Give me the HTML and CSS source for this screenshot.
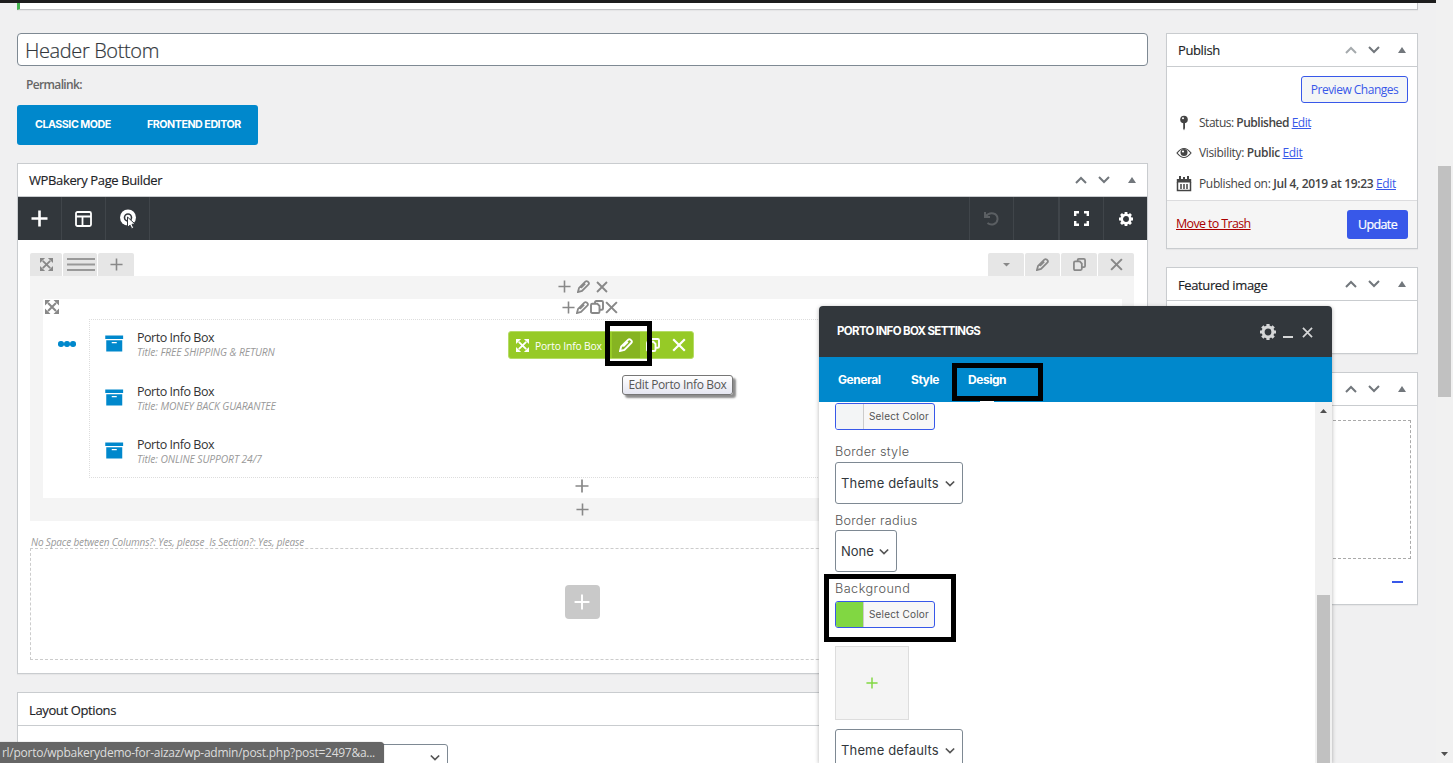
FILE: index.html
```html
<!DOCTYPE html>
<html lang="en">
<head>
<meta charset="utf-8">
<title>Edit Block</title>
<link rel="stylesheet" href="styles.css">
</head>
<body>
<svg class="sprite" aria-hidden="true">
  <symbol id="plus" viewBox="0 0 14 14"><path d="M7 0.5v13M0.5 7h13" fill="none" stroke="currentColor" stroke-width="1.7"/></symbol>
  <symbol id="cross" viewBox="0 0 14 14"><path d="M1.200 1.200l11.600 11.600M12.800 1.200l-11.600 11.600" fill="none" stroke="currentColor" stroke-width="2.200"/></symbol>
  <symbol id="pencil" viewBox="0 0 14 14"><path d="M1 13l1.200-4.400L9 1.800q1.200-1.200 2.400-.2l1 1q1 1.200-.2 2.400L5.400 11.800zM8.800 3.800l-4.600 4.600" fill="none" stroke="currentColor" stroke-width="1.900"/></symbol>
  <symbol id="copy" viewBox="0 0 14 14"><path d="M5 3.500V2.300Q5 1 6.300 1h5.400Q13 1 13 2.300v6.200q0 1.300-1.300 1.300H10M2.300 3.700h5L9.500 6v5.700Q9.500 13 8.200 13H2.300Q1 13 1 11.700V5q0-1.300 1.300-1.300z" fill="none" stroke="currentColor" stroke-width="1.900"/></symbol>
  <symbol id="move" viewBox="0 0 14 14"><path d="M3 3l8 8M11 3l-8 8" stroke="currentColor" stroke-width="2"/><path d="M0 0h5.500L0 5.500zM14 0v5.500L8.500 0zM0 14V8.500L5.500 14zM14 14H8.500L14 8.500z" fill="currentColor"/></symbol>
  <symbol id="up" viewBox="0 0 12 8"><path d="M1 7l5-5 5 5" fill="none" stroke="currentColor" stroke-width="2"/></symbol>
  <symbol id="down" viewBox="0 0 12 8"><path d="M1 1l5 5 5-5" fill="none" stroke="currentColor" stroke-width="2"/></symbol>
  <symbol id="tri" viewBox="0 0 8 6"><path d="M4 0l4 6H0z" fill="currentColor"/></symbol>
  <symbol id="gear" viewBox="0 0 16 16"><circle cx="8" cy="8" r="4.900" fill="none" stroke="currentColor" stroke-width="3"/><path d="M8 0v3M8 13v3M0 8h3M13 8h3M2.300 2.300l2 2M11.700 11.700l2 2M2.300 13.700l2-2M11.700 4.300l2-2" stroke="currentColor" stroke-width="3.200"/></symbol>
  <symbol id="archive" viewBox="0 0 18 17"><path fill="currentColor" fill-rule="evenodd" d="M0 0.500h18v3.500H0zM1 5.200h16V16.500H1zM6.500 7v1.200h5V7z"/></symbol>
</svg>

<div class="adminbar"></div>
<div class="notice"></div>

<main class="layout">
  <section class="primary">
    <div class="title-field">Header Bottom</div>
    <div class="permalink">Permalink:</div>
    <div class="modes"><a class="mode">CLASSIC MODE</a><a class="mode mode-front">FRONTEND EDITOR</a></div>

    <div class="box builder">
      <div class="box-head"><h2>WPBakery Page Builder</h2><div class="handles"><svg><use href="#up"/></svg><svg><use href="#down"/></svg><svg class="tri"><use href="#tri"/></svg></div></div>
      <div class="toolbar">
        <div class="tool"><svg width="17" height="17" viewBox="0 0 17 17"><path d="M8.500 .5v16M.5 8.500h16" stroke="#fff" stroke-width="2.600"/></svg></div>
        <div class="tool"><svg width="17" height="16" viewBox="0 0 17 16" fill="none" stroke="#fff" stroke-width="1.800"><rect x="1" y="1" width="15" height="14" rx="1.500"/><path d="M1 5.500h15M7.500 5.500V15"/></svg></div>
        <div class="tool"><svg width="18" height="20" viewBox="0 0 18 20"><circle cx="9" cy="8.500" r="8" fill="#fff"/><circle cx="9" cy="8.500" r="3.500" fill="none" stroke="#32373c" stroke-width="1.600"/><path d="M8.500 8l7.500 7-3 .3 1.700 3.500-2 .9-1.600-3.500-2.600 2z" fill="#fff" stroke="#32373c"/></svg></div>
        <div class="tool tool-undo"><svg width="15" height="15" viewBox="0 0 15 15" fill="none" stroke="#5b5f63" stroke-width="2"><path d="M1 1v5h5M1.500 5.500C6 0 14 2 13.500 8.500 13 13.500 7 15 3.500 12"/></svg></div>
        <div class="tool tool-blank"></div>
        <div class="tool"><svg width="15" height="15" viewBox="0 0 15 15" fill="none" stroke="#fff" stroke-width="2.400"><path d="M1.200 5V1.200H5M10 1.200h3.800V5M13.800 10v3.800H10M5 13.800H1.200V10"/></svg></div>
        <div class="tool tool-last"><svg class="i14 white"><use href="#gear"/></svg></div>
      </div>
      <div class="canvas">
        <div class="row-controls">
          <span class="ctl w32"><svg class="i13"><use href="#move"/></svg></span>
          <span class="ctl w34"><svg width="28" height="13" viewBox="0 0 28 13"><path d="M0 1h28M0 6.500h28M0 12h28" stroke="#999" stroke-width="1.800"/></svg></span>
          <span class="ctl w36"><svg class="i13"><use href="#plus"/></svg></span>
          <span class="ctl w36 push"><svg width="7" height="4" viewBox="0 0 7 4"><path d="M0 0h7L3.500 3.500z" fill="#888"/></svg></span>
          <span class="ctl w35"><svg class="i13"><use href="#pencil"/></svg></span>
          <span class="ctl w36"><svg class="i13"><use href="#copy"/></svg></span>
          <span class="ctl w36"><svg class="i13"><use href="#cross"/></svg></span>
        </div>
        <div class="section-area">
          <div class="col-controls"><svg class="i13"><use href="#plus"/></svg><svg class="i13"><use href="#pencil"/></svg><svg class="i12"><use href="#cross"/></svg></div>
          <div class="column">
            <div class="inner-controls"><svg class="i14 mover"><use href="#move"/></svg><div class="inner-icons"><svg class="i13"><use href="#plus"/></svg><svg class="i13"><use href="#pencil"/></svg><svg class="i14"><use href="#copy"/></svg><svg class="i13"><use href="#cross"/></svg></div></div>
            <div class="inner-row">
              <div class="dots"><i></i><i></i><i></i></div>
              <div class="elements">
                <div class="element"><svg><use href="#archive"/></svg><div><h4>Porto Info Box</h4><p>Title: FREE SHIPPING &amp; RETURN</p></div></div>
                <div class="element"><svg><use href="#archive"/></svg><div><h4>Porto Info Box</h4><p>Title: MONEY BACK GUARANTEE</p></div></div>
                <div class="element"><svg><use href="#archive"/></svg><div><h4>Porto Info Box</h4><p>Title: ONLINE SUPPORT 24/7</p></div></div>
              </div>
            </div>
            <div class="add-line"><svg class="i14"><use href="#plus"/></svg></div>
          </div>
          <div class="add-line add-outer"><svg class="i13"><use href="#plus"/></svg></div>
        </div>
        <div class="params">No Space between Columns?: Yes, please&nbsp; Is Section?: Yes, please</div>
        <div class="dropzone"><span class="big-add"><svg class="i16"><use href="#plus"/></svg></span></div>
      </div>
    </div>

    <div class="box options">
      <div class="box-head low"><h2>Layout Options</h2></div>
      <div class="option-select"><svg class="chev"><use href="#down"/></svg></div>
    </div>
  </section>

  <aside class="side">
    <div class="box">
      <div class="box-head"><h2>Publish</h2><div class="handles"><svg class="faded"><use href="#up"/></svg><svg><use href="#down"/></svg><svg class="tri"><use href="#tri"/></svg></div></div>
      <div class="publish">
        <a class="preview">Preview Changes</a>
        <div class="fact"><svg width="16" height="16" viewBox="0 0 16 16"><circle cx="8" cy="4.500" r="3.800" fill="#444"/><path d="M7.200 7h1.800v6L8 15.500l-.8-2z" fill="#444"/><circle cx="7" cy="3.300" r="1" fill="#fff"/></svg><span class="stat">Status: <b>Published</b> <a>Edit</a></span></div>
        <div class="fact"><svg width="16" height="16" viewBox="0 0 16 16"><path d="M1 8q7-9 14 0-7 9-14 0z" fill="none" stroke="#444" stroke-width="1.200"/><circle cx="8" cy="7.600" r="3.500" fill="#444"/><circle cx="7" cy="6.500" r="1.100" fill="#fff"/></svg><span>Visibility: <b>Public</b> <a>Edit</a></span></div>
        <div class="fact"><svg width="16" height="16" viewBox="0 0 16 16"><path d="M1.500 6v8.500h13V6M5 8v5M8 8v5M11 8v5" fill="none" stroke="#444" stroke-width="1.500"/><path d="M.8 3h14.400v3.500H.8zM3 0h2v4H3zM11 0h2v4h-2zM7 1h2v3H7z" fill="#444"/></svg><span>Published on: <b>Jul 4, 2019 at 19:23</b> <a>Edit</a></span></div>
      </div>
      <div class="publish-foot"><a class="trash">Move to Trash</a><a class="update">Update</a></div>
    </div>
    <div class="box featured">
      <div class="box-head low"><h2>Featured image</h2><div class="handles"><svg><use href="#up"/></svg><svg><use href="#down"/></svg><svg class="tri"><use href="#tri"/></svg></div></div>
    </div>
    <div class="box last">
      <div class="box-head"><div class="handles"><svg><use href="#up"/></svg><svg><use href="#down"/></svg><svg class="tri"><use href="#tri"/></svg></div></div>
      <div class="last-body"><div class="dashed"></div><i class="minus"></i></div>
    </div>
  </aside>
</main>

<div class="hover-bar">
  <svg class="i13 bar-move"><use href="#move"/></svg><span class="bar-name">Porto Info Box</span>
  <span class="bar-edit"><svg class="i14"><use href="#pencil"/></svg></span>
  <svg class="i14 bar-copy"><use href="#copy"/></svg><svg class="i14"><use href="#cross"/></svg>
</div>
<div class="tip">Edit Porto Info Box</div>

<div class="modal">
  <div class="modal-head"><h3>PORTO INFO BOX SETTINGS</h3><div class="modal-actions"><svg class="i16"><use href="#gear"/></svg><i></i><svg class="close"><use href="#cross"/></svg></div></div>
  <div class="tabs"><span class="t-general">General</span><span class="t-style">Style</span><span class="t-design">Design</span></div>
  <div class="modal-body">
    <div class="form">
      <div class="picker"><i></i><span>Select Color</span></div>
      <label class="l-style">Border style</label>
      <div class="select">Theme defaults<svg class="chev"><use href="#down"/></svg></div>
      <label class="l-radius">Border radius</label>
      <div class="select small">None<svg class="chev"><use href="#down"/></svg></div>
      <label class="l-back">Background</label>
      <div class="picker green"><i></i><span>Select Color</span></div>
      <div class="tile"><svg width="12" height="12"><use href="#plus"/></svg></div>
      <div class="select">Theme defaults<svg class="chev"><use href="#down"/></svg></div>
    </div>
    <div class="modal-scroll"><svg width="7" height="4" viewBox="0 0 7 4"><path d="M3.500 0L7 4H0z" fill="#505050"/></svg><i></i></div>
  </div>
</div>

<div class="mark mark-edit"></div>
<div class="mark mark-design"></div>
<div class="tab-notch"></div>
<div class="mark mark-back"></div>

<div class="page-scroll"><i></i><svg width="7" height="4" viewBox="0 0 7 4"><path d="M0 0h7L3.500 4z" fill="#505050"/></svg></div>
<div class="status"><span>rl/porto/wpbakerydemo-for-aizaz/wp-admin/post.php?post=2497&amp;a...</span></div>
</body>
</html>
```
FILE: styles.css
```css
* { box-sizing: border-box; }
body { margin: 0; height: 763px; overflow: hidden; position: relative; background: #f0f0f1; color: #444; font: 13px/20px "Open Sans", "Noto Sans", sans-serif; letter-spacing: -0.35px; }
h2, h3, h4, p { margin: 0; font-weight: 400; }
i { display: block; }
svg { display: block; flex: none; }
.sprite { position: absolute; width: 0; height: 0; }
.i12 { width: 12px; height: 12px; }
.i13 { width: 13px; height: 13px; }
.i14 { width: 14px; height: 14px; }
.i16 { width: 16px; height: 16px; }
.white { color: #fff; }

.adminbar { width: 1436px; height: 3px; background: #1d1d1d; }
.notice { width: 1401px; height: 7px; margin: 0 0 23px 17px; background: #fff; border: solid #c3c4c7; border-width: 0 1px 1px 3px; border-left-color: #46b450; box-shadow: 0 1px 1px rgba(0,0,0,.04); }
.layout { display: grid; grid-template-columns: 1131px 252px; gap: 18px; margin-left: 17px; align-items: start; }

.title-field { height: 33px; border: 1px solid #7e8993; border-radius: 4px; background: #fff; padding: 0 7px; font-size: 20px; line-height: 33px; font-weight: 300; letter-spacing: -.38px; color: #32373c; -webkit-text-stroke: .2px; }
.permalink { margin: 9px 0 10px 9px; font-size: 12px; font-weight: 600; letter-spacing: -.65px; color: #666; }
.modes { display: flex; width: 241px; height: 40px; padding-left: 18px; border-radius: 3px; background: #0088cc; align-items: center; gap: 36px; }
.mode { width: 77px; font: 700 10.700px/16px Inter, sans-serif; color: #fff; letter-spacing: -.48px; white-space: nowrap; }
.mode-front { width: 94px; margin-left: -1px; }

.box { background: #fff; border: 1px solid #c9cccf; box-shadow: 0 1px 1px rgba(0,0,0,.04); }
.box-head { display: flex; align-items: center; height: 33px; border-bottom: 1px solid #c9cccf; padding: 0 11px; }
.box-head h2 { font-size: 13px; font-weight: 400; color: #1d2327; -webkit-text-stroke: .15px; letter-spacing: -.38px; }
.box-head.low h2 { padding-top: 2px; }
.handles { display: flex; align-items: center; gap: 11px; margin-left: auto; color: #72777c; }
.handles svg { width: 12px; height: 8px; }
.handles .tri { width: 8px; height: 6px; margin: 0 0 1px 7px; }
.handles .faded { color: #a5aaad; }

.builder { height: 511px; margin-top: 18px; }
.toolbar { display: flex; height: 43px; background: #32373c; }
.tool { width: 44px; border-right: 1px solid #40454a; display: flex; align-items: center; justify-content: center; }
.tool-undo { margin-left: auto; width: 45px; border-left: 1px solid #40454a; }
.tool-blank { width: 46px; border-right-width: 2px; }
.tool-last { border: 0; width: 43px; }
.canvas { padding: 13px 13px 0 12px; }
.row-controls { display: flex; gap: 1px; height: 23px; color: #888; }
.ctl { display: flex; align-items: center; justify-content: center; background: #e6e6e6; border-radius: 2px 2px 0 0; }
.w32 { width: 32px; } .w34 { width: 34px; padding-left: 2px; } .w35 { width: 35px; } .w36 { width: 36px; }
.push { margin-left: auto; }
.section-area { height: 245px; padding: 0 12px 0 13px; background: #f4f4f4; color: #888; }
.col-controls { display: flex; height: 23px; justify-content: center; align-items: center; gap: 6px; padding: 0 0 2px; }
.column { height: 199px; background: #fff; }
.inner-controls { display: flex; align-items: center; height: 16px; }
.mover { margin-left: 2px; }
.inner-icons { display: flex; align-items: center; gap: 1px; margin-left: 503px; }
.inner-row { display: flex; height: 163px; padding-top: 4px; }
.dots { display: flex; gap: .5px; width: 46px; padding: 22px 0 0 15px; }
.dots i { width: 5.600px; height: 5.600px; border-radius: 50%; background: #0088cc; }
.elements { flex: 1; border: 1px dotted #ddd; padding: 9px 0 0 15px; margin-right: 46px; }
.element { display: flex; gap: 13.500px; height: 53.500px; color: #0088cc; }
.element svg { width: 18.500px; height: 17px; margin-top: 6px; }
.element h4 { font-size: 12.500px; line-height: 17px; color: #333; letter-spacing: -.47px; }
.element p { font-size: 10.300px; line-height: 13px; font-style: italic; color: #999; letter-spacing: -.1px; white-space: nowrap; }
.add-line { display: flex; height: 16px; align-items: center; justify-content: center; padding-right: 1px; }
.add-outer { height: 23px; }
.params { height: 27px; padding: 12px 0 0 1px; font-size: 10px; line-height: 19px; font-style: italic; color: #999; letter-spacing: -.15px; white-space: nowrap; }
.dropzone { display: flex; align-items: center; justify-content: center; height: 112px; padding-bottom: 4px; border: 1px dashed #ccc; }
.big-add { display: flex; align-items: center; justify-content: center; width: 35px; height: 34px; border-radius: 4px; background: #c9c9c9; color: #fff; }
.options { margin-top: 18px; height: 90px; }
.option-select { width: 250px; height: 40px; margin: 18px 0 0 180px; border: 1px solid #7e8993; border-radius: 3px; display: flex; justify-content: flex-end; padding: 9px 7px; color: #555; }
.chev { width: 10px; height: 8px; }

.side .box { margin-bottom: 18px; }
.publish { height: 134px; padding: 9px; border-bottom: 1px solid #dcdcde; }
.preview { display: block; width: 107px; height: 27px; margin: 0 0 10px auto; border: 1px solid #3858e9; border-radius: 3px; background: #f3f5f6; color: #3858e9; text-align: center; line-height: 26px; font-size: 12px; letter-spacing: -.5px; }
.fact { display: flex; gap: 7px; height: 30.300px; white-space: nowrap; font-size: 12px; }
.fact svg { margin-top: 2px; }
.fact b { font-weight: 600; }
.fact a { color: #3858e9; text-decoration: underline; }
.fact .stat { letter-spacing: -.48px; }
.publish-foot { display: flex; justify-content: space-between; height: 47px; padding: 9px; background: #f5f5f5; }
.trash { color: #a00; text-decoration: underline; font-size: 12.500px; line-height: 28px; letter-spacing: -.65px; }
.update { width: 61px; height: 29px; border-radius: 3px; background: #3858e9; color: #fff; text-align: center; line-height: 29px; font-size: 12.500px; letter-spacing: -.6px; -webkit-text-stroke: .2px; }
.featured { height: 87px; }
.last { height: 233px; }
.last-body { padding: 14px 6px; }
.dashed { height: 139px; border: 1px dashed #aaa; }
.minus { width: 11px; height: 2px; margin: 22px 8px 0 auto; background: #3858e9; }

.hover-bar { position: absolute; left: 508px; top: 331px; width: 186px; height: 28px; display: flex; align-items: center; padding-left: 7px; background: #96ca26; border: 1px solid #b5dc66; border-radius: 3px; color: #fff; }
.bar-name { width: 70px; margin-left: 6px; padding-top: 2px; font-size: 10.300px; letter-spacing: -.15px; white-space: nowrap; }
.bar-edit { display: flex; align-items: center; justify-content: center; width: 28px; height: 26px; margin-left: 7px; background: #86b422; }
.bar-copy { margin: 0 12px 0 6px; }
.tip { position: absolute; left: 622px; top: 375px; width: 111px; height: 20px; border: 1px solid #767676; border-radius: 3px; background: linear-gradient(#fff, #e4e5f0); box-shadow: 3px 3px 2px rgba(0,0,0,.45); color: #575757; font-size: 12px; line-height: 18px; text-align: center; white-space: nowrap; letter-spacing: -.35px; }

.modal { position: absolute; left: 819px; top: 306px; width: 513px; height: 457px; background: #fff; border-radius: 4px 4px 0 0; box-shadow: 0 1px 4px rgba(0,0,0,.3); overflow: hidden; font-family: Inter, sans-serif; }
.modal-head { display: flex; align-items: center; height: 51px; padding: 0 19px 2px 18px; background: #32373c; }
.modal-head h3 { color: #fff; font-size: 11.500px; font-weight: 700; letter-spacing: -.65px; }
.modal-actions { display: flex; align-items: center; gap: 7px; margin-left: auto; color: #d5d6d7; padding-top: 3px; }
.modal-actions i { width: 10px; height: 2px; margin-top: 9px; background: currentColor; }
.modal-actions .close { width: 11px; height: 11px; margin-left: 2px; }
.tabs { display: flex; height: 45px; padding-left: 19px; background: #0088cc; color: #fff; font-size: 12px; font-weight: 700; line-height: 45px; letter-spacing: -.45px; }
.t-general { width: 73px; } .t-style { width: 57px; }
.tab-notch { position: absolute; left: 980px; top: 401px; width: 14px; height: 1px; background: #fff; }
.modal-body { display: flex; height: 361px; }
.form { flex: 1; padding: 1px 0 0 16px; }
.picker { display: flex; width: 100px; height: 27px; border: 1px solid #3858e9; border-radius: 3px; background: #f7f7f7; overflow: hidden; color: #555; font-size: 10px; line-height: 25px; letter-spacing: .17px; white-space: nowrap; }
.picker i { width: 28px; border-right: 1px solid #ccc; margin-right: 5px; background: #f3f5f6; }
.picker.green i { background: #81d742; }
.form label { display: block; height: 20px; color: #555; font-size: 12.700px; font-weight: 300; letter-spacing: .25px; }
.form .l-style { margin: 12px 0 0; }
.form .l-radius { margin-top: 7px; height: 19px; }
.form .l-back { margin-top: 7px; height: 22px; letter-spacing: .45px; }
.select { display: flex; align-items: center; justify-content: space-between; width: 128px; height: 42px; padding: 0 7px 0 5px; border: 1px solid #7e8993; border-radius: 3px; color: #32373c; font-size: 13px; letter-spacing: .15px; white-space: nowrap; }
.select .chev { margin-top: 2px; color: #555; }
.select.small { width: 62px; letter-spacing: 0; }
.tile { display: flex; align-items: center; justify-content: center; width: 74px; height: 74px; margin: 18px 0 9px; padding-bottom: 1px; background: #f4f4f4; border: 1px solid #ddd; color: #81d742; }
.modal-scroll { width: 17px; padding: 7px 2px 0; background: #f1f1f1; }
.modal-scroll svg { margin-left: 3px; }
.modal-scroll i { height: 168px; margin-top: 182px; background: #c1c1c1; }

.mark { position: absolute; border: 5px solid #000; }
.mark-edit { left: 605px; top: 321px; width: 47px; height: 45px; }
.mark-design { left: 952px; top: 363px; width: 91px; height: 38px; }
.mark-back { left: 824px; top: 574px; width: 132px; height: 68px; }
.page-scroll { position: absolute; right: 0; top: 0; width: 17px; height: 763px; padding: 166px 2px 0; background: #f1f1f1; }
.page-scroll i { height: 231px; background: #c1c1c1; }
.page-scroll svg { margin: 355px 0 0 3px; }
.status { position: absolute; left: 0; bottom: 0; width: 384px; height: 21px; display: flex; justify-content: flex-end; padding-right: 9px; overflow: hidden; border-radius: 0 4px 0 0; background: #666; color: #ddd; font-size: 12px; line-height: 21px; letter-spacing: -.26px; white-space: nowrap; box-shadow: 0 0 1px rgba(0,0,0,.5); }
```
